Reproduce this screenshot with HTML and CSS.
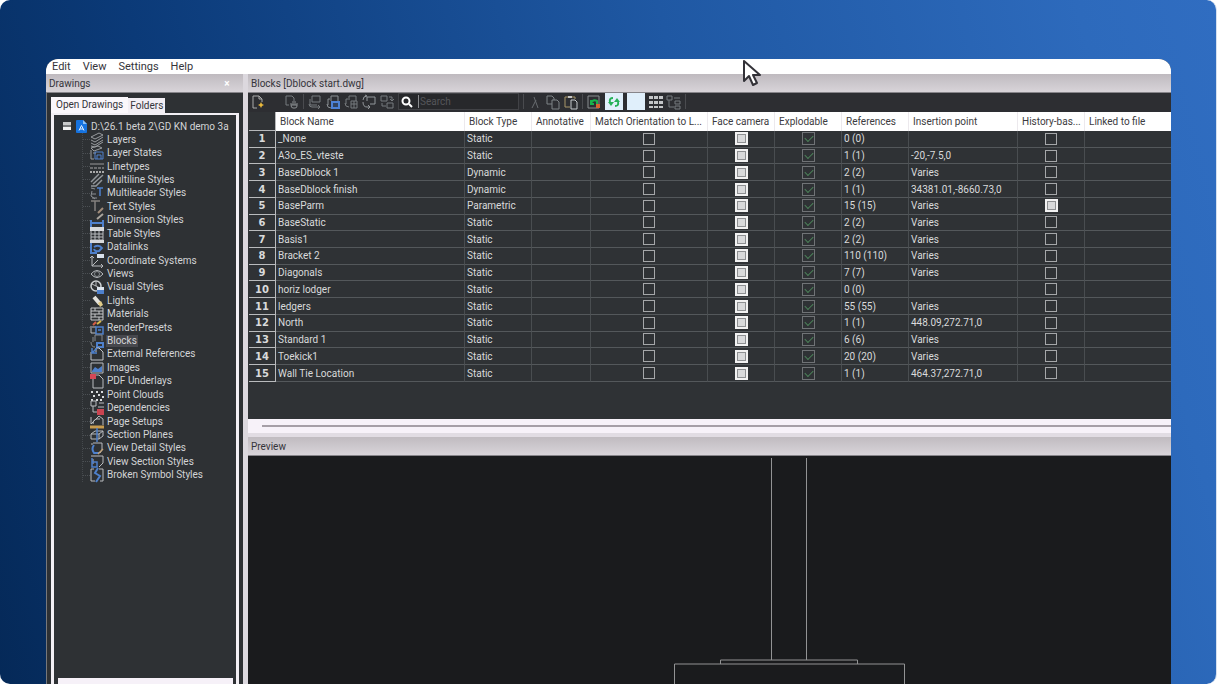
FILE: index.html
```html
<!DOCTYPE html>
<html lang="en">
<head>
<meta charset="utf-8">
<title>Drawing Explorer</title>
<link rel="stylesheet" href="styles.css">
</head>
<body>
<div class="stage">
  <div class="app">
    <nav class="menubar">
      <button>Edit</button><button>View</button><button>Settings</button><button>Help</button>
    </nav>
    <div class="panes">
      <aside class="drawings">
        <header class="pane-title"><span>Drawings</span><button class="close" aria-label="Close">×</button></header>
        <div class="dock">
          <div class="tabs" role="tablist">
            <button class="tab tab-active" role="tab" aria-selected="true">Open Drawings</button><button class="tab" role="tab" aria-selected="false">Folders</button>
          </div>
          <div class="tree-frame">
            <div class="root">
              <button class="collapse" aria-label="Collapse"></button>
              <svg class="dwg" viewBox="0 0 11 13"><path d="M0 1q0-1 1-1h6l4 4v8q0 1-1 1H1q-1 0-1-1z" fill="#1673e0"/><path d="M7 0l4 4H7z" fill="#8cc0f5"/><path d="M3 10.500l2.500-5 2.500 5M4 9h3" fill="none" stroke="#e4f1ff"/></svg>
              <span class="root-name">D:\26.1 beta 2\GD KN demo 3a</span>
            </div>
            <ul class="tree" id="tree"></ul>
            <div class="tree-scroll"></div>
          </div>
        </div>
      </aside>
      <main class="content">
        <header class="pane-title">Blocks [Dblock start.dwg]</header>
        <div class="toolbar">
          <button class="tool wide" aria-label="New"><svg viewBox="0 0 16 16"><path d="M7 14H3V2h6l3 3v3M9 2v3h3" fill="none" stroke="#aaa"/><path d="M11 8l1 2 2 1-2 1-1 2-1-2-2-1 2-1z" fill="#e9b93c"/></svg></button>
          <button class="tool" aria-label="Purge"><svg viewBox="0 0 16 16"><path d="M5 11H2V2h6l2 2v3" fill="none" stroke="#777b7e"/><path d="M9 7v4m2-4v4m2-2v3q0 2-2 2H9q-2 0-2-3V9M7 11h6" fill="none" stroke="#8b8e91"/></svg></button>
          <span class="divider"></span>
          <button class="tool" aria-label="Insert block"><svg viewBox="0 0 16 16"><path d="M5 2h8v6H5zM3 5v6h7M2 10q0 3 3 3h8l-2-2m2 2l-2 2" fill="none" stroke="#777b7e"/></svg></button>
          <button class="tool" aria-label="Edit block"><svg viewBox="0 0 16 16"><path d="M6 7V2h7v6M5 5H3v6m-1-1q0 4 4 4" fill="none" stroke="#8b9094"/><path d="M7 8h7v6H7z" fill="#32445f" stroke="#4d82d5" stroke-width="2"/></svg></button>
          <button class="tool" aria-label="Block table"><svg viewBox="0 0 16 16"><path d="M6 6V2h7v5M5 5H3v5m-1-1q0 4 4 4M8 7h6v7H8zM8 10h6M11 7v7" fill="none" stroke="#777b7e"/></svg></button>
          <button class="tool" aria-label="Convert block"><svg viewBox="0 0 16 16"><path d="M6 7V3h8v7H9M2 6q0-4 4-4L4 1M2 8q0 5 4 5h3l-2-2m2 2l-2 2" fill="none" stroke="#92969a"/></svg></button>
          <button class="tool wide" aria-label="Replace block"><svg viewBox="0 0 16 16"><path d="M2 2h6v5H2zM8 9h6v5H8zM10 3h3v4m-2-2l2 2 2-2M3 9v3h4" fill="none" stroke="#777b7e"/></svg></button>
          <label class="search"><svg viewBox="0 0 12 12"><circle cx="5" cy="5" r="3.500" fill="none" stroke="#fff" stroke-width="2"/><path d="M8 8l3 3" stroke="#fff" stroke-width="2"/></svg><input type="text" placeholder="Search" aria-label="Search"></label>
          <span class="divider"></span>
          <button class="tool" aria-label="Cut"><svg viewBox="0 0 16 16"><path d="M7 3l4 11M9 6L5 14" fill="none" stroke="#686c70"/></svg></button>
          <button class="tool" aria-label="Copy"><svg viewBox="0 0 16 16"><path d="M7 10H2V2h5l2 2v2M7 6h5l2 2v7H7z" fill="none" stroke="#7f8386"/></svg></button>
          <button class="tool" aria-label="Paste"><svg viewBox="0 0 16 16"><path d="M7 13H2V3h10v2" fill="none" stroke="#a99668"/><path d="M5 2h4v2H5z" fill="#c5c5c5"/><path d="M8 6h4l2 2v7H8z" fill="none" stroke="#c4c7ca"/></svg></button>
          <span class="divider"></span>
          <button class="tool" aria-label="Regenerate"><svg viewBox="0 0 16 16"><path d="M2 2h11v12H2z" fill="none" stroke="#8a8d90"/><path d="M5 6v4h3M5 9q2-4 6-2v3" fill="none" stroke="#19b34b" stroke-width="2"/><path d="M10 10h4v4h-4z" fill="#d7632f"/></svg></button>
          <button class="tool tool-on" aria-label="Synchronize"><svg viewBox="0 0 16 16"><path d="M7 4Q3 4 4 8M9 12q4 0 3-4" fill="none" stroke="#26b158" stroke-width="2"/><path d="M2 8h6l-3 4zM14 8H8l3-4z" fill="#26b158"/></svg></button>
          <button class="tool tool-on" aria-label="Details view"></button>
          <button class="tool" aria-label="Icon view"><svg viewBox="0 0 16 16"><path d="M1 2h4v3H1zM6 2h4v3H6zM11 2h4v3h-4zM1 7h4v3H1zM6 7h4v3H6zM11 7h4v3h-4zM1 12h4v2H1zM6 12h4v2H6zM11 12h4v2h-4z" fill="#c4c6c8"/></svg></button>
          <button class="tool" aria-label="Tree view"><svg viewBox="0 0 16 16"><path d="M1 2h5v4H1zM3 6v7h5M8 4h6M9 7h5v3H9zM9 12h5v3H9z" fill="none" stroke="#777b7e"/></svg></button>
          <span class="divider"></span>
        </div>
        <div class="grid-area">
          <table class="blocks">
            <colgroup><col class="c-num"><col class="c-name"><col class="c-std"><col class="c-anno"><col class="c-match"><col class="c-std"><col class="c-std"><col class="c-std"><col class="c-point"><col class="c-std"><col></colgroup>
            <thead><tr><th></th><th>Block Name</th><th>Block Type</th><th>Annotative</th><th>Match Orientation to L...</th><th>Face camera</th><th>Explodable</th><th>References</th><th>Insertion point</th><th>History-bas...</th><th>Linked to file</th></tr></thead>
            <tbody id="rows"></tbody>
          </table>
        </div>
        <div class="hscroll"><div class="hthumb"></div></div>
        <header class="pane-title preview-title">Preview</header>
        <section class="preview" aria-label="Preview">
          <svg viewBox="0 0 232 228"><path d="M98.500 2v202M133.500 2v202M47.500 208v-4h137v4M1.500 228v-20h230v20" fill="none" stroke="#929394"/></svg>
        </section>
      </main>
    </div>
  </div>
  <svg class="pointer" viewBox="0 0 18 28"><path d="M1 2v20l5-5 4 9 4-2-4-8h7z" fill="#fff" stroke="#333238" stroke-width="2" stroke-linejoin="round"/></svg>
</div>
<script src="app.js"></script>
</body>
</html>
```
FILE: styles.css
```css
* { box-sizing: border-box; }
body { margin: 0; background: #fff; font: 10px/13px Roboto, "Noto Sans", sans-serif; color: #35343a; }
button { font: inherit; color: inherit; border: 0; padding: 0; margin: 0; background: none; }
svg { display: block; }

.stage { position: relative; height: 100vh; padding: 59px 45px 0 46px; overflow: hidden; border-right: 1px solid #d5e0ef; border-radius: 10px; background: linear-gradient(75deg, #052958 0%, #0b3a78 22%, #1f58a3 60%, #2d6abc 90%, #306dc1 100%); }
.app { height: 100%; display: flex; flex-direction: column; overflow: hidden; border-radius: 12px 12px 0 0; background: #2e3134; }
.pointer { position: absolute; left: 743px; top: 59px; width: 18px; height: 28px; }

.menubar { display: flex; gap: 12px; height: 15px; padding: 0 6px; background: #fff; flex: none; font-size: 11px; line-height: 15px; }
.panes { display: flex; flex: 1; min-height: 0; }
.pane-title { display: flex; align-items: center; justify-content: space-between; flex: none; height: 19px; padding: 0 3px; border-bottom: 1px solid #87858a; background: linear-gradient(#bfbabf, #d8d4d9); }
.close { width: 18px; margin-right: 4px; color: #fff; font-weight: 700; }

.drawings { display: flex; flex-direction: column; width: 202px; flex: none; border-right: 5px solid #dcd8de; }
.dock { display: flex; flex-direction: column; flex: 1; min-height: 0; padding: 4px 4px 0 4px; border-left: 1px solid #77787b; }
.tabs { display: flex; align-items: flex-end; height: 16px; }
.tab { height: 15px; padding: 0 2px; background: #f2eef4; line-height: 15px; }
.tab-active { height: 16px; padding: 0 5px; background: #faf7fb; line-height: 16px; }
.tree-frame { display: flex; flex-direction: column; flex: 1; min-height: 0; padding-top: 4px; border: 3px solid #f2eff4; border-top-width: 2px; border-bottom: 0; background: #2e3134; color: #d3d4d6; }
.root { display: flex; align-items: center; height: 14px; padding: 0 3px 0 9px; }
.collapse { width: 8px; height: 8px; margin-right: 5px; flex: none; background: linear-gradient(#c9cacb 3px, #77797b 3px, #77797b 5px, #f2f2f2 5px); }
.dwg { width: 11px; height: 13px; margin-right: 4px; flex: none; }
.root-name { white-space: nowrap; overflow: hidden; }
.tree { display: grid; grid-template-rows: repeat(26, minmax(0, 1fr)); height: 349px; margin: 0 0 0 28px; padding: 0; list-style: none; border-left: 1px dotted #45494d; flex: none; }
.tree li { display: flex; align-items: center; }
.tree li::before { content: ""; width: 7px; border-top: 1px dotted #4c5054; }
.tree svg { width: 14px; height: 14px; margin-right: 2px; flex: none; overflow: visible; }
.tree span { padding: 0 1px; line-height: 12px; }
.tree .selected { background: #47484d; }
.tree-scroll { height: 6px; margin: auto 3px 0 4px; background: #f6f1f8; }

.content { display: flex; flex-direction: column; flex: 1; min-width: 0; }
.toolbar { display: flex; align-items: center; height: 19px; flex: none; padding: 0 0 2px 1px; background: #2d2e32; }
.tool { width: 18px; height: 17px; display: grid; place-items: center; flex: none; }
.tool svg { width: 16px; height: 16px; }
.wide { margin-right: 16px; }
.wide + .search { margin-left: -14px; }
.tool-on { background: #e0effb; margin: 0 2px; }
.divider { width: 1px; height: 15px; margin: 0 2px; background: #4a4b4f; }
.search { display: flex; align-items: center; width: 121px; height: 17px; margin-right: 2px; padding-left: 2px; border: 1px solid #414246; background: #27282b; }
.search svg { width: 12px; height: 12px; margin-right: 5px; flex: none; }
.search input { flex: 1; min-width: 0; height: 13px; padding: 0 1px; border: 0; border-left: 1px solid #8b8c8f; outline: 0; background: none; font: inherit; color: #ddd; }
.search input::placeholder { color: #55565a; }

.grid-area { height: 307px; flex: none; overflow: hidden; padding-left: 1px; background: #2f3235; }
.blocks { width: 100%; height: 270px; table-layout: fixed; border-collapse: separate; border-spacing: 0; color: #d9dadb; }
.c-num { width: 27px; } .c-name { width: 189px; } .c-std { width: 67px; } .c-anno { width: 59px; } .c-match { width: 117px; } .c-point { width: 109px; }
.blocks th, .blocks td { padding: 0 0 0 2px; text-align: left; white-space: nowrap; overflow: hidden; line-height: 13px; }
.blocks thead th { height: 19px; padding-left: 4px; border-right: 1px solid #ece9ed; background: #fff; color: #3c3b40; font-weight: 400; }
.blocks thead th:first-child { background: #303336; border: 1px solid #b6b8ba; border-left: 0; border-top: 0; }
.blocks tbody th { padding: 0; text-align: center; font-family: "DejaVu Sans", sans-serif; border-right: 1px solid #b9bbbd; border-bottom: 1px solid #b9bbbd; }
.blocks td { border-right: 1px solid #494d50; border-bottom: 1px solid #54585b; }
.blocks td:last-child, .blocks th:last-child { border-right: 0; }
.blocks .mark { padding: 0; text-align: center; }
.mark input { appearance: none; display: block; width: 12px; height: 12px; margin: 0 auto; border: 1px solid #a5a7a9; }
.mark .mixed { width: 13px; height: 13px; border: 2px solid #f2f2f2; background: #d9dadb; box-shadow: inset 0 0 0 1px #8e9092; }
.mark .on { position: relative; width: 13px; height: 13px; border-color: #707376; }
.mark .on::after { content: ""; position: absolute; left: 2px; top: 2px; width: 7px; height: 4px; border: solid #4c8359; border-width: 0 0 1px 1px; transform: rotate(-45deg); }

.hscroll { display: flex; align-items: center; height: 14px; flex: none; padding-left: 14px; background: #f7f2f9; }
.hthumb { flex: 1; height: 2px; background: #a69fa7; }
.preview-title { height: 23px; padding-top: 4px; background: linear-gradient(#e1dce3 4px, #c0bbc0 4px, #d8d4d9); }
.preview { display: flex; justify-content: center; flex: 1; min-height: 0; overflow: hidden; background: #1a1b1d; }
.preview svg { width: 232px; height: 228px; flex: none; margin-right: -158px; }
```
FILE: app.js
```js
const G = '#b9bcbf', B = '#4e80cc';
const line = (d, c = G, w = 1) => `<path d="${d}" fill="none" stroke="${c}" stroke-width="${w}"/>`;
const fill = (d, c = G) => `<path d="${d}" fill="${c}"/>`;

const tree = [
  ['Layers', line('M1 4l8-4 4 2-8 4zM1 7l4 2 8-5M1 10l4 2 8-5M1 13l4 1 8-5', '#999c9f')],
  ['Layer States', line('M1 2l7-2 4 2-8 3zM1 4v9h3M3 7h3', '#999c9f') + line('M5 6h8v7H5zM7 13V9h4v4', B)],
  ['Linetypes', line('M0 4h14', '#999', 1) + '<path d="M0 8h14" stroke="#aaa" stroke-dasharray="3 1"/><path d="M0 12h14" stroke="#aaa" stroke-width="2" stroke-dasharray="2 1"/>'],
  ['Multiline Styles', line('M1 9l8-8M3 11l10-9M1 13h5l6-6', '#92969a', 1.5)],
  ['Multileader Styles', line('M1 2l4 1M2 5l-1 5 4 3M2 12h5M2 8h4', '#8c9094') + line('M7 2h6M10 2v8', B, 1.5)],
  ['Text Styles', line('M1 1h9M5 1v10', '#85817f', 1.5) + line('M8 13l5-5', '#a18c7a', 2)],
  ['Dimension Styles', line('M7 6l6-5', '#aaa49c', 2) + line('M1 7v7M13 7v7M1 10h12', B, 2)],
  ['Table Styles', fill('M0 0h14v4H0z', '#d7d9dc') + line('M1 4v9h12V4M1 7h12M1 10h12M5 4v9M9 4v9') + line('M8 13l6-6', '#777', 1)],
  ['Datalinks', fill('M0 0h14v3H0z', '#d7d9dc') + line('M1 3v10h6M4 7q5-3 8 1l-3 3q-4 1-5-2', B, 2)],
  ['Coordinate Systems', line('M2 2v10h11M2 12l6-6M0 4l2-2 2 2M11 10l2 2-2 2') + fill('M7 0h7v4H7z', '#d9e2ed')],
  ['Views', line('M1 7q6-7 12 0q-6 7-12 0') + '<circle cx="7" cy="7" r="2.500" fill="none" stroke="#85898c"/>'],
  ['Visual Styles', '<circle cx="6" cy="6" r="5" fill="none" stroke="#ccd0d2" stroke-width="1.500"/>' + line('M2 4l8 4M6 1v5') + fill('M7 7h7v3H7z', '#dce4ee') + fill('M7 10h7v4H7z', B)],
  ['Lights', line('M4 3l6 7', '#e4e2dc', 4) + fill('M8 9l3-2 2 4-3 2z', '#e0ca87')],
  ['Materials', line('M1 1h12v12H1zM1 4h12M1 7h12M1 10h12M5 1v3M9 4v3M5 7v3M9 10v3', '#c7c9cb')],
  ['RenderPresets', line('M3 4l3-3', '#d75f46', 2) + line('M7 3l4-3', '#d6ba4b', 2) + line('M1 5v7h5M2 6h4') + line('M6 6h7v7H6zM8 9h3', B, 1.5)],
  ['Blocks', line('M5 7V1h7v6M1 8q0 5 4 5M3 3v5', '#85898d') + line('M7 9h6v4H7z', B, 2)],
  ['External References', line('M1 5v8h12V5l-4-4H6v4', '#c1c4c8') + line('M2 1v5h5M3 5l4-4', B, 1.5)],
  ['Images', line('M1 2h12v10H1z') + fill('M2 10l3-4 3 2 4-3v6H2z', B)],
  ['PDF Underlays', line('M3 4v10h10V5L9 1H6') + fill('M0 0h6v5H0z', '#d44856')],
  ['Point Clouds', fill('M1 3h2v2H1zM6 3h2v2H6zM11 3h2v2h-2zM3 7h2v2H3zM8 6h2v2H8zM12 8h2v2h-2zM1 11h2v2H1zM6 11h2v2H6zM10 11h2v2h-2z', '#d8dadc')],
  ['Dependencies', line('M1 0h5v5H1zM9 2h5M3 5v6h4M8 6h6') + fill('M7 8h7v6H7z', '#c94451')],
  ['Page Setups', line('M1 2v7l8-8 4 3v6M3 9q0-6 7-5') + line('M0 12h14', '#c69b4f', 3)],
  ['Section Planes', line('M1 6l4-3h8v5l-4 3H1zM1 6h8v5M9 6l4-3') + line('M7 0v14', B, 1.5)],
  ['View Detail Styles', line('M3 2h9v7l-2 3M1 3h2') + line('M4 4q-3 4 0 8h5', B, 2) + line('M8 13l5-5', '#c2a37b', 1.5)],
  ['View Section Styles', line('M1 1h12v7l-4 4M3 9V4') + line('M2 3v9h5V7H2', B, 1.5)],
  ['Broken Symbol Styles', line('M4 1H1v12h4M9 1h4v12h-3') + line('M8 0L5 5l5 3-4 6', B, 2)]
];

document.getElementById('tree').innerHTML = tree.map(([name, art]) =>
  `<li><svg viewBox="0 0 14 14">${art}</svg><span${name === 'Blocks' ? ' class="selected"' : ''}>${name}</span></li>`).join('');

const blocks = [
  ['_None', 'Static', '0 (0)', ''],
  ['A3o_ES_vteste', 'Static', '1 (1)', '-20,-7.5,0'],
  ['BaseDblock 1', 'Dynamic', '2 (2)', 'Varies'],
  ['BaseDblock finish', 'Dynamic', '1 (1)', '34381.01,-8660.73,0'],
  ['BaseParm', 'Parametric', '15 (15)', 'Varies'],
  ['BaseStatic', 'Static', '2 (2)', 'Varies'],
  ['Basis1', 'Static', '2 (2)', 'Varies'],
  ['Bracket 2', 'Static', '110 (110)', 'Varies'],
  ['Diagonals', 'Static', '7 (7)', 'Varies'],
  ['horiz lodger', 'Static', '0 (0)', ''],
  ['ledgers', 'Static', '55 (55)', 'Varies'],
  ['North', 'Static', '1 (1)', '448.09,272.71,0'],
  ['Standard 1', 'Static', '6 (6)', 'Varies'],
  ['Toekick1', 'Static', '20 (20)', 'Varies'],
  ['Wall Tie Location', 'Static', '1 (1)', '464.37,272.71,0']
];
const box = (label, kind = '') =>
  `<td class="mark"><input type="checkbox" aria-label="${label}" class="${kind}"${kind === 'on' ? ' checked' : ''}></td>`;

document.getElementById('rows').innerHTML = blocks.map(([name, type, refs, point], i) =>
  `<tr><th>${i + 1}</th><td>${name}</td><td>${type}</td><td></td>${box('Match orientation, ' + name)}${box('Face camera, ' + name, 'mixed')}${box('Explodable, ' + name, 'on')}<td>${refs}</td><td>${point}</td>${box('History-based, ' + name, type === 'Parametric' ? 'mixed' : '')}<td></td></tr>`).join('');
```
